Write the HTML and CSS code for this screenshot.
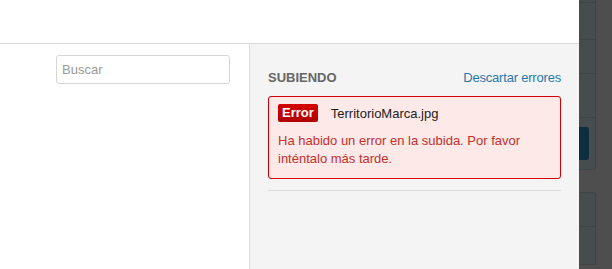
FILE: index.html
```html
<!DOCTYPE html>
<html lang="es">
<head>
<meta charset="utf-8">
<title>Subiendo</title>
<link rel="stylesheet" href="styles.css">
</head>
<body>
<div class="app">
  <div class="main">
    <header class="topbar"></header>
    <div class="content">
      <aside class="left">
        <input class="search" type="text" placeholder="Buscar">
      </aside>
      <section class="uploads">
        <div class="uploads-head">
          <h2 class="title">SUBIENDO</h2>
          <a class="dismiss" href="#">Descartar errores</a>
        </div>
        <div class="error-box">
          <div class="error-row">
            <span class="badge">Error</span>
            <span class="filename">TerritorioMarca.jpg</span>
          </div>
          <p class="error-msg">Ha habido un error en la subida. Por favor inténtalo más tarde.</p>
        </div>
        <hr class="divider">
      </section>
    </div>
  </div>
  <div class="dark">
    <div class="dark-col">
      <div class="panel p1"></div>
      <div class="panel p2"></div>
      <div class="panel p3"></div>
      <div class="panel p4"></div>
      <div class="panel p5"><span class="btn"></span></div>
      <div class="panel p6"></div>
      <div class="panel p7"></div>
    </div>
  </div>
</div>
</body>
</html>
```
FILE: styles.css
```css
* { box-sizing: border-box; }
html, body { margin: 0; padding: 0; height: 100%; }
body {
  font-family: "Liberation Sans", Arial, sans-serif;
  font-size: 13px;
  color: #222;
  background: #4e4e4e;
  overflow: hidden;
}
.app { display: flex; height: 269px; }
.main { width: 579px; display: flex; flex-direction: column; background: #fff; }
.topbar { height: 44px; border-bottom: 1px solid #d9d9d9; background: #fff; flex: none; }
.content { flex: 1; display: flex; }
.left {
  width: 250px;
  border-right: 1px solid #dcdcdc;
  background: #fff;
  padding: 11px 18px 0 56px;
}
.search {
  display: block;
  width: 174px;
  height: 29px;
  border: 1px solid #d6d6d6;
  border-radius: 3px;
  padding: 0 5px;
  font-family: inherit;
  font-size: 13px;
  color: #333;
  background: #fff;
  outline: none;
}
.search::placeholder { color: #9a9a9a; }
.uploads { flex: 1; background: #f4f4f4; padding: 26px 18px 0 18px; }
.uploads-head { display: flex; justify-content: space-between; align-items: baseline; height: 26px; }
.title { margin: 0; font-size: 13px; font-weight: bold; color: #666; }
.dismiss { color: #2b78a8; text-decoration: none; font-size: 13px; letter-spacing: -0.2px; }
.error-box {
  border: 1px solid #d40000;
  border-radius: 3px;
  background: #fde9e8;
  padding: 7px 9px 10px;
}
.error-row { display: flex; align-items: center; gap: 13px; height: 18px; }
.badge {
  display: inline-block;
  height: 18px;
  line-height: 18px;
  padding: 0 4px;
  border-radius: 2px;
  background: linear-gradient(#d40000, #b00000);
  color: #fff;
  font-weight: bold;
  font-size: 13px;
}
.filename { color: #222; }
.error-msg { margin: 10px 0 0; color: #c2302b; line-height: 18px; }
.divider { margin: 11px 0 0; border: 0; border-top: 1px solid #dcdcdc; height: 0; }
.dark { flex: 1; background: #4e4e4e; display: flex; }
.dark-col {
  width: 17px;
  display: flex;
  flex-direction: column;
}
.panel {
  background: #474c4e;
  border-right: 1px solid #3f4446;
  border-bottom: 1px solid #3f4446;
  position: relative;
  flex: none;
}
.p1 { height: 3px; }
.p2 { height: 37px; }
.p3 { height: 34px; }
.p4 { height: 44px; }
.p5 { height: 52px; border-radius: 0 0 3px 0; }
.p6 { height: 35px; margin-top: 22px; border-top: 1px solid #3f4446; border-radius: 0 3px 0 0; }
.p7 { height: 38px; }
.btn {
  position: absolute;
  left: 0; top: 9px;
  width: 10px; height: 33px;
  background: #0d2e3e;
  border-radius: 0 3px 3px 0;
}
```
